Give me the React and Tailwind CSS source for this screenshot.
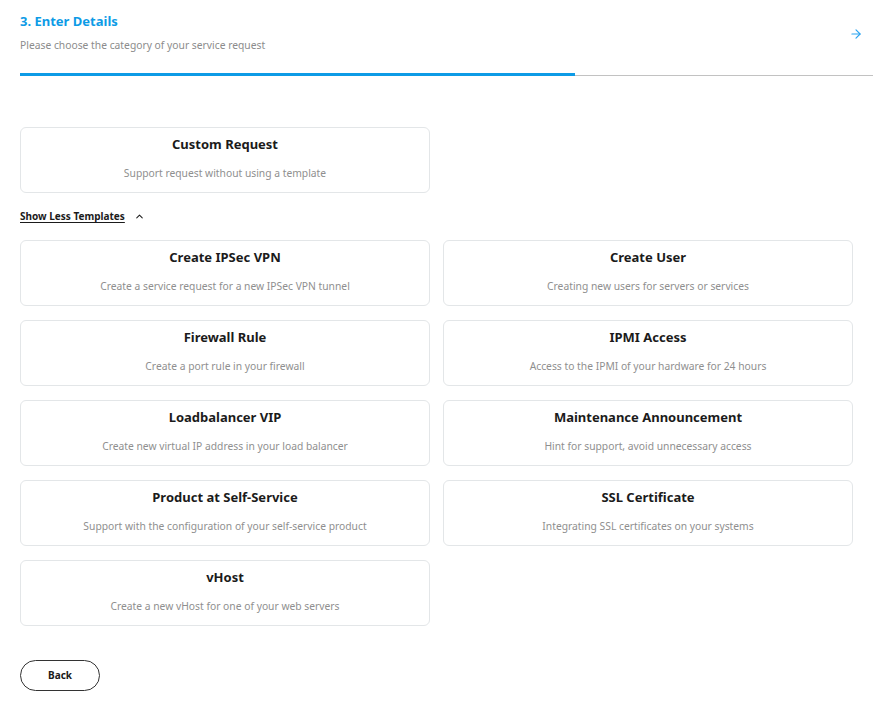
import { ArrowRight, ChevronUp } from 'lucide-react';

const templates = [
  { title: 'Create IPSec VPN', text: 'Create a service request for a new IPSec VPN tunnel' },
  { title: 'Create User', text: 'Creating new users for servers or services' },
  { title: 'Firewall Rule', text: 'Create a port rule in your firewall' },
  { title: 'IPMI Access', text: 'Access to the IPMI of your hardware for 24 hours' },
  { title: 'Loadbalancer VIP', text: 'Create new virtual IP address in your load balancer' },
  { title: 'Maintenance Announcement', text: 'Hint for support, avoid unnecessary access' },
  { title: 'Product at Self-Service', text: 'Support with the configuration of your self-service product' },
  { title: 'SSL Certificate', text: 'Integrating SSL certificates on your systems' },
  { title: 'vHost', text: 'Create a new vHost for one of your web servers' },
];

function TemplateCard({ title, text }) {
  return (
    <button className="flex h-[66px] flex-col items-center rounded-md border border-[#e3e6e8] bg-white pt-[8px] text-center">
      <div className="text-[13px] font-bold leading-[16px] text-[#1b1b1b]">{title}</div>
      <div className="mt-[14px] text-[10.3px] leading-[14px] text-[#8f8f8f]">{text}</div>
    </button>
  );
}

export default function App() {
  return (
    <div className="min-h-[722px] bg-white pl-5 pr-[13px] pt-[12px] font-['Noto_Sans',sans-serif]">
      <div className="flex items-start justify-between">
        <div>
          <h2 className="text-[13px] font-bold leading-[18px] text-[#0d9be6]">3. Enter Details</h2>
          <p className="mt-[8px] text-[10.3px] leading-[14px] text-[#8c8c8c]">Please choose the category of your service request</p>
        </div>
        <ArrowRight className="mr-[10px] mt-[15px] text-[#2ba4f0]" size={14} strokeWidth={2} />
      </div>
      <div className="mt-[21px] flex items-end">
        <div className="h-[3px] w-[555px] bg-[#0d9be6]" />
        <div className="h-px flex-1 bg-[#c2c2c2]" />
      </div>

      <div className="mr-[20px] mt-[51px] grid grid-cols-2 gap-x-[13px]">
        <TemplateCard title="Custom Request" text="Support request without using a template" />
      </div>

      <button className="mt-[16px] flex items-center gap-[9px] text-[10px] font-bold text-[#1b1b1b]">
        <span className="underline underline-offset-2">Show Less Templates</span>
        <ChevronUp size={11} strokeWidth={2.2} />
      </button>

      <div className="mr-[20px] mt-[16px] grid grid-cols-2 gap-x-[13px] gap-y-[14px]">
        {templates.map((t) => (
          <TemplateCard key={t.title} title={t.title} text={t.text} />
        ))}
      </div>

      <button className="mt-[34px] h-[31px] w-[80px] rounded-full border border-[#333] text-[10px] font-bold text-[#1b1b1b]">
        Back
      </button>
    </div>
  );
}
